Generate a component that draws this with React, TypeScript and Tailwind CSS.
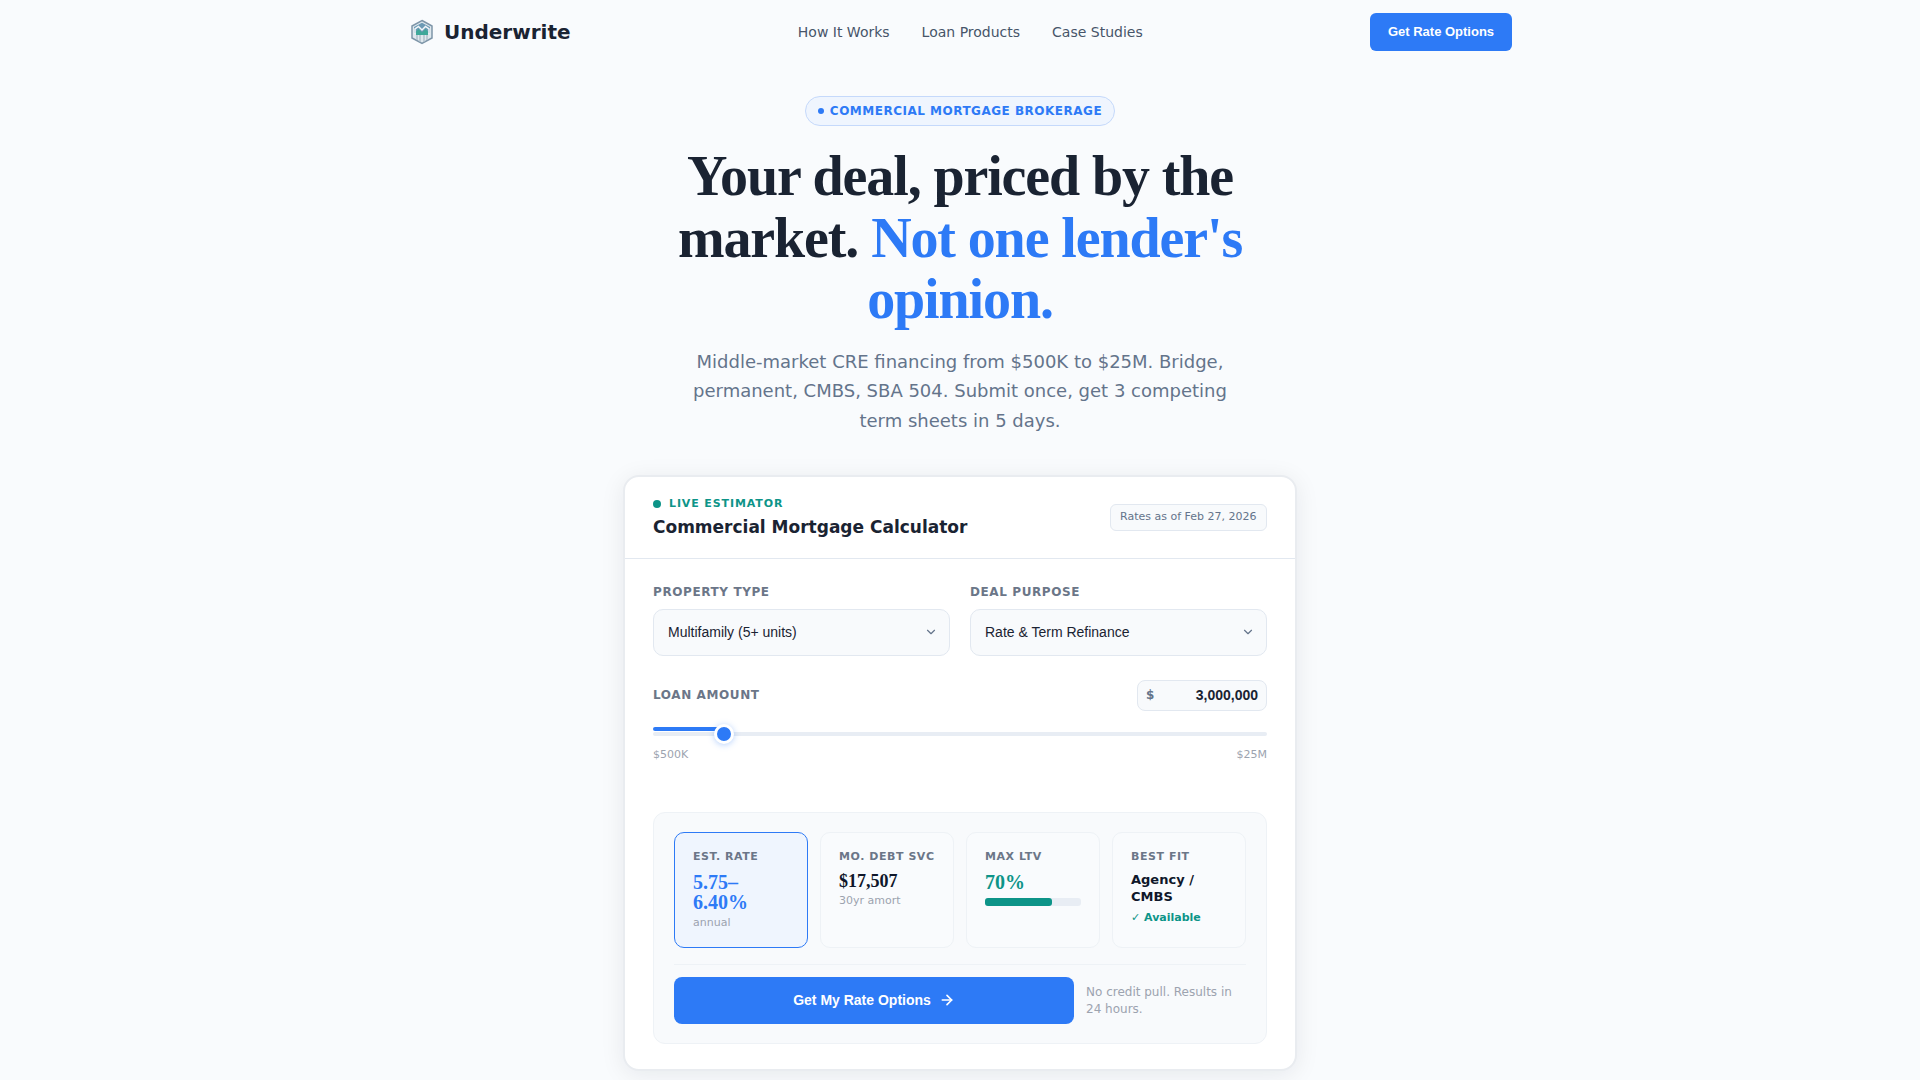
import { ArrowRight, ChevronDown } from "lucide-react";

const sans = "font-['DejaVu_Sans',sans-serif]";

function Logo() {
    return (
        <svg width="28" height="26" viewBox="0 0 28 26" fill="none">
            <path d="M14 1.500 24 7v12l-10 5.500L4 19V7z" fill="#dfe8ee" stroke="#7d95a8" strokeWidth="1.500" />
            <path d="M6 8 14 3.800 22 8v6H6z" fill="#6c9ab5" />
            <path d="M7 14.500V10l3.500-2.500L14 11l3.500-3.500L21 10v4.500" stroke="#f3f7fa" strokeWidth="1.500" />
            <path d="M8 16v-3.500l2.500-2.500 3.500 3.500 3.500-3.500 2.500 2.500V16z" fill="#3fa89a" />
            <path d="M9 16v5M12 16v7M16 16v7M19 16v5" stroke="#a9bac7" strokeWidth="1.300" />
        </svg>
    );
}

function SelectBox({ label, value }: { label: string; value: string }) {
    return (
        <div>
            <div className="text-[12px] leading-[18px] font-bold tracking-[0.6px] text-[#6b7688] mb-[8px]">{label}</div>
            <div className="h-[47px] rounded-[10px] border border-[#e2e8f0] bg-[#f8fafc] pl-[14px] pr-[11px] flex items-center justify-between">
                <span className="font-['Liberation_Sans',sans-serif] text-[14px] text-[#1a2332]">{value}</span>
                <ChevronDown size={14} strokeWidth={2} className="text-[#64748b]" />
            </div>
        </div>
    );
}

function Metric({ label, active, children }: { label: string; active?: boolean; children: React.ReactNode }) {
    return (
        <div className={active ? "rounded-[10px] border border-[#2d7af6] bg-[#eff5fe] px-[18px] pt-[16px]" : "rounded-[10px] border border-[#eef2f6] bg-[#f9fbfd] px-[18px] pt-[16px]"}>
            <div className="text-[11px] leading-[16px] font-bold tracking-[0.55px] text-[#6b7688] mb-[6px] whitespace-nowrap">{label}</div>
            {children}
        </div>
    );
}

export default function App() {
    return (
        <div className={`h-[1080px] overflow-hidden bg-[#f9fbfd] ${sans} text-[#1a2332]`}>
            <nav className="w-[1104px] mx-auto h-[64px] flex items-center justify-between">
                <div className="flex items-center gap-[8px]">
                    <Logo />
                    <span className="text-[20px] font-bold">Underwrite</span>
                </div>
                <div className="flex items-center gap-[32px] text-[14px] text-[#475569]">
                    <span>How It Works</span>
                    <span>Loan Products</span>
                    <span>Case Studies</span>
                </div>
                <button className="h-[38px] w-[142px] rounded-[6px] bg-[#2d7af6] text-white font-['Liberation_Sans',sans-serif] font-bold text-[13px]">Get Rate Options</button>
            </nav>

            <header className="flex flex-col items-center pt-[32px]">
                <div className="h-[30px] px-[12px] rounded-full border border-[#c5d9fb] bg-[#eff5fe] flex items-center gap-[6px] text-[12px] font-bold tracking-[0.5px] text-[#2d7af6]">
                    <span className="w-[6px] h-[6px] rounded-full bg-[#2d7af6]" />
                    COMMERCIAL MORTGAGE BROKERAGE
                </div>
                <h1 className="w-[720px] mt-[20px] text-center font-['Liberation_Serif',serif] font-bold text-[56px] leading-[61.6px] tracking-[-1.12px]">
                    Your deal, priced by the market. <span className="text-[#2d7af6]">Not one lender's opinion.</span>
                </h1>
                <p className="w-[560px] mt-[16px] text-center text-[18px] leading-[29.7px] text-[#64748b]">
                    Middle-market CRE financing from $500K to $25M. Bridge, permanent, CMBS, SBA 504. Submit once, get 3 competing term sheets in 5 days.
                </p>
            </header>

            <section className="w-[674px] mx-auto mt-[39px] rounded-[16px] border-2 border-[#e9ecf0] bg-white shadow-[0_4px_24px_rgba(15,23,42,0.08)]">
                <div className="h-[82px] px-[28px] border-b border-[#e2e8f0] flex items-center justify-between">
                    <div className="pt-[2px]">
                        <div className="flex items-center gap-[8px] text-[11px] leading-[16px] font-bold tracking-[0.88px] text-[#0d9488]">
                            <span className="w-[8px] h-[8px] rounded-full bg-[#0d9488]" />
                            LIVE ESTIMATOR
                        </div>
                        <div className="text-[17px] leading-[26px] font-bold mt-[2px]">Commercial Mortgage Calculator</div>
                    </div>
                    <div className="h-[27px] px-[9.500px] rounded-[6px] border border-[#e2e8f0] bg-[#f8fafc] flex items-center text-[11px] text-[#64748b]">Rates as of Feb 27, 2026</div>
                </div>

                <div className="px-[28px] pt-[24px] pb-[25px]">
                    <div className="grid grid-cols-2 gap-[20px]">
                        <SelectBox label="PROPERTY TYPE" value="Multifamily (5+ units)" />
                        <SelectBox label="DEAL PURPOSE" value="Rate & Term Refinance" />
                    </div>

                    <div className="mt-[24px] flex items-center justify-between">
                        <div className="text-[12px] font-bold tracking-[0.6px] text-[#6b7688]">LOAN AMOUNT</div>
                        <div className="h-[31px] w-[130px] rounded-[8px] border border-[#e2e8f0] bg-[#f8fafc] px-[8px] flex items-center justify-between font-['Liberation_Sans',sans-serif] font-bold text-[14px]">
                            <span className={`${sans} text-[#64748b] text-[12px]`}>$</span>
                            <span>3,000,000</span>
                        </div>
                    </div>

                    <div className="relative mt-[21px] h-[4px]">
                        <div className="h-[4px] rounded-full bg-[#e8edf4]" />
                        <div className="absolute left-0 top-[-5px] h-[4px] w-[68px] rounded-full bg-[#2d7af6]" />
                        <div className="absolute left-[61px] top-[-8px] w-[20px] h-[20px] rounded-full bg-[#2d7af6] border-[3px] border-white shadow-[0_1px_6px_rgba(45,122,246,0.35)]" />
                    </div>
                    <div className="mt-[11px] flex justify-between text-[11px] leading-[16px] text-[#9ca3af]">
                        <span>$500K</span>
                        <span>$25M</span>
                    </div>

                    <div className="mt-[49px] rounded-[12px] border border-[#eef2f6] bg-[#f8fafc] pt-[19px] px-[20px] pb-[19px]">
                        <div className="grid grid-cols-4 gap-[12px] h-[116px]">
                            <Metric label="EST. RATE" active>
                                <div className="font-['Liberation_Serif',serif] font-bold text-[20px] leading-[20px] text-[#2d7af6] pt-[1px]">5.75–6.40%</div>
                                <div className="text-[11px] leading-[16px] text-[#9ca3af] mt-[3px]">annual</div>
                            </Metric>
                            <Metric label="MO. DEBT SVC">
                                <div className="font-['Liberation_Serif',serif] font-bold text-[18px] leading-[20px] text-[#0f172a]">$17,507</div>
                                <div className="text-[11px] leading-[16px] text-[#9ca3af] mt-[2px]">30yr amort</div>
                            </Metric>
                            <Metric label="MAX LTV">
                                <div className="font-['Liberation_Serif',serif] font-bold text-[20px] leading-[22px] text-[#0d9488]">70%</div>
                                <div className="h-[8px] rounded-[3px] bg-[#e8edf4] mt-[5px]">
                                    <div className="h-full w-[70%] rounded-[3px] bg-[#0d9488]" />
                                </div>
                            </Metric>
                            <Metric label="BEST FIT">
                                <div className="text-[13px] leading-[17px] font-bold text-[#0f172a]">Agency / CMBS</div>
                                <div className="text-[11px] leading-[16px] font-bold text-[#0d9488] mt-[5px]">✓ Available</div>
                            </Metric>
                        </div>

                        <div className="mt-[16px] pt-[12px] border-t border-[#eef2f6] flex items-center gap-[12px]">
                            <button className="w-[400px] h-[47px] shrink-0 rounded-[8px] bg-[#2d7af6] text-white font-['Liberation_Sans',sans-serif] font-bold text-[14px] flex items-center justify-center gap-[8px]">
                                Get My Rate Options
                                <ArrowRight size={16} strokeWidth={2.500} />
                            </button>
                            <p className="pt-[2px] text-[12px] leading-[17px] text-[#9ca3af]">No credit pull. Results in 24 hours.</p>
                        </div>
                    </div>
                </div>
            </section>
        </div>
    );
}
